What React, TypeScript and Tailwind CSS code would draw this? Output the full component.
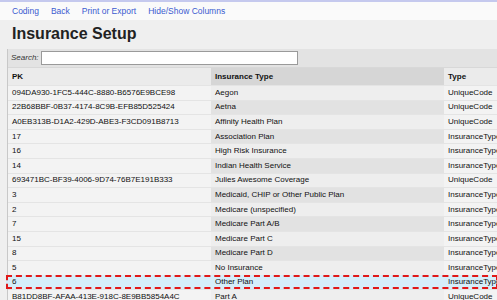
import React from "react";

type Row = { pk: string; name: string; type: string };

const rows: Row[] = [
  { pk: "094DA930-1FC5-444C-8880-B6576E9BCE98", name: "Aegon", type: "UniqueCode" },
  { pk: "22B68BBF-0B37-4174-8C9B-EFB85D525424", name: "Aetna", type: "UniqueCode" },
  { pk: "A0EB313B-D1A2-429D-ABE3-F3CD091B8713", name: "Affinity Health Plan", type: "UniqueCode" },
  { pk: "17", name: "Association Plan", type: "InsuranceType" },
  { pk: "16", name: "High Risk Insurance", type: "InsuranceType" },
  { pk: "14", name: "Indian Health Service", type: "InsuranceType" },
  { pk: "693471BC-BF39-4006-9D74-76B7E191B333", name: "Julies Awesome Coverage", type: "UniqueCode" },
  { pk: "3", name: "Medicaid, CHIP or Other Public Plan", type: "InsuranceType" },
  { pk: "2", name: "Medicare (unspecified)", type: "InsuranceType" },
  { pk: "7", name: "Medicare Part A/B", type: "InsuranceType" },
  { pk: "15", name: "Medicare Part C", type: "InsuranceType" },
  { pk: "8", name: "Medicare Part D", type: "InsuranceType" },
  { pk: "5", name: "No Insurance", type: "InsuranceType" },
  { pk: "6", name: "Other Plan", type: "InsuranceType" },
  { pk: "B81DD8BF-AFAA-413E-918C-8E9BB5854A4C", name: "Part A", type: "UniqueCode" },
];

const selected = 13;

export default function App() {
  return (
    <div className="w-[497px] h-[300px] overflow-hidden bg-[#efefef] font-['Liberation_Sans',Arial,sans-serif] text-[#111]">
      <nav className="flex h-[20px] items-center gap-3 border-t-2 border-[#c5c9ee] bg-[#fafafa] pl-[12px] text-[8.5px] text-[#3a5bd0]">
        <a>Coding</a>
        <a>Back</a>
        <a>Print or Export</a>
        <a>Hide/Show Columns</a>
      </nav>
      <h1 className="pl-[12px] pt-[5px] text-[16px] font-bold leading-[18px] text-[#222]">Insurance Setup</h1>

      <div className="ml-[7px] mt-[6px] w-[520px] border-l border-[#c8c8c8]">
        <div className="flex h-[18px] items-center bg-[#e3e3e3] pl-[3px] text-[8px] italic text-[#333]">
          <span className="w-[30px]">Search:</span>
          <div className="h-[14px] w-[257px] border border-[#9a9a9a] bg-white" />
        </div>

        <div className="flex h-[18px] items-center border-t border-[#d8d8d8] text-[8px] font-bold">
          <div className="flex h-full w-[203px] items-center bg-[#ebebeb] pl-[4px]">PK</div>
          <div className="flex h-full w-[233px] items-center bg-[#d6d6d6] pl-[4px]">Insurance Type</div>
          <div className="flex h-full flex-1 items-center bg-[#ebebeb] pl-[4px]">Type</div>
        </div>

        {rows.map((r, i) => {
          const isSel = i === selected;
          return (
            <div
              key={r.pk}
              className={
                isSel
                  ? "-ml-[2px] flex h-[14.6px] w-[492px] items-center bg-[#d5eefa] text-[8px] outline-2 outline-dashed outline-[#e01818] -outline-offset-2"
                  : "flex h-[14.6px] items-center border-t border-[#e4e4e4] text-[8px]"
              }
            >
              <div className={isSel ? "w-[205px] pl-[6px]" : "flex h-full w-[203px] items-center bg-[#f3f3f3] pl-[4px]"}>{r.pk}</div>
              <div
                className={
                  isSel
                    ? "w-[233px] pl-[4px]"
                    : i % 2 === 1
                      ? "flex h-full w-[233px] items-center bg-[#e2e2e2] pl-[4px]"
                      : "flex h-full w-[233px] items-center bg-[#eeeeee] pl-[4px]"
                }
              >
                {r.name}
              </div>
              <div className={isSel ? "flex-1 overflow-hidden whitespace-nowrap pl-[4px]" : "flex h-full flex-1 items-center bg-[#f3f3f3] pl-[4px] whitespace-nowrap"}>{r.type}</div>
            </div>
          );
        })}
      </div>
    </div>
  );
}
